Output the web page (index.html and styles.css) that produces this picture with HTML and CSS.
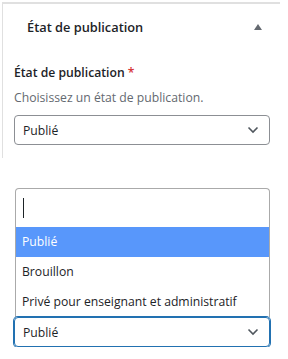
FILE: index.html
```html
<!DOCTYPE html>
<html lang="fr">
<head>
  <meta charset="UTF-8">
  <meta name="viewport" content="width=device-width, initial-scale=1.0">
  <title>État de publication</title>
  <link rel="stylesheet" href="styles.css">
</head>
<body>
  <!-- Panneau -->
  <div class="panel">
    <div class="panel-header">
      <h2>État de publication</h2>
      <span class="toggle"></span>
    </div>
    <div class="panel-body">
      <label class="field-label">État de publication <span class="required">*</span></label>
      <p class="help">Choisissez un état de publication.</p>
      <div class="select">
        <span>Publié</span>
        <svg class="chevron" width="12" height="8" viewBox="0 0 12 8"><path d="M1.5 1.5 L6 6 L10.5 1.5" fill="none" stroke="#50575e" stroke-width="1.6"/></svg>
      </div>
    </div>
  </div>

  <!-- Liste ouverte -->
  <div class="picker">
    <div class="dropdown">
      <div class="search"><span class="caret"></span></div>
      <ul class="options">
        <li class="active">Publié</li>
        <li>Brouillon</li>
        <li>Privé pour enseignant et administratif</li>
      </ul>
    </div>
    <div class="select focused">
      <span>Publié</span>
      <svg class="chevron" width="12" height="8" viewBox="0 0 12 8"><path d="M1.5 1.5 L6 6 L10.5 1.5" fill="none" stroke="#50575e" stroke-width="1.6"/></svg>
    </div>
  </div>
</body>
</html>
```

FILE: styles.css
```css
body {
  margin: 0;
  font-family: "Open Sans", "Noto Sans", sans-serif;
  font-size: 12.2px;
  color: #1d2327;
  background: white;
}

.panel {
  margin: 2px 0 0 2px;
  width: 277px;
  border-top: 2px solid #e0e0e0;
  border-left: 1px solid #e0e0e0;
  height: 154px;
}

.panel-header {
  display: flex;
  align-items: center;
  justify-content: space-between;
  height: 46px;
  padding: 0 18px 0 24px;
}

.panel-header h2 {
  margin: 0;
  font-size: 12.8px;
  font-weight: 600;
}

.toggle {
  width: 0;
  height: 0;
  border-left: 4px solid transparent;
  border-right: 4px solid transparent;
  border-bottom: 6px solid #646970;
}

.panel-body {
  padding: 13px 8px 0 11px;
}

.field-label {
  display: block;
  font-weight: 600;
  line-height: 20px;
}

.required {
  color: #d63638;
}

.help {
  margin: 6px 0 8px;
  color: #646970;
  line-height: 18px;
}

.select {
  display: flex;
  align-items: center;
  justify-content: space-between;
  box-sizing: border-box;
  width: 256px;
  height: 30px;
  padding: 0 10px 0 8px;
  border: 1px solid #8c8f94;
  border-radius: 4px;
}

.chevron {
  display: block;
}

.picker {
  margin: 30px 0 0 14px;
  width: 256px;
}

.dropdown {
  margin-left: 1px;
  width: 255px;
  box-sizing: border-box;
  border: 1px solid #aaa;
  border-bottom: none;
  border-radius: 4px 4px 0 0;
}

.search {
  height: 38px;
  padding: 9px 7px 0;
  box-sizing: border-box;
}

.caret {
  display: block;
  width: 1px;
  height: 20px;
  background: #1d2327;
}

.options {
  list-style: none;
  margin: 0;
  padding: 0;
}

.options li {
  padding: 6px 6px;
  line-height: 18px;
}

.options li.active {
  background-color: #5897fb;
  color: white;
}

.select.focused {
  border-color: #2271b1;
  box-shadow: 0 0 0 1px #2271b1;
}
```
